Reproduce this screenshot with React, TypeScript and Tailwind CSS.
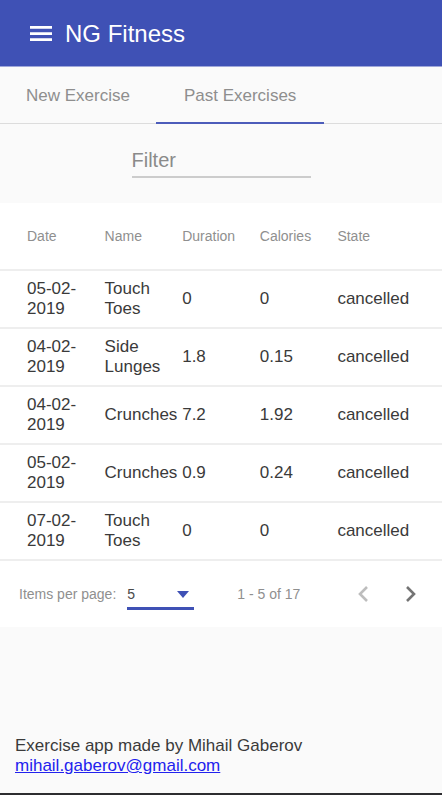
const exercises = [
  { date: '05-02-2019', name: 'Touch Toes', duration: '0', calories: '0', state: 'cancelled' },
  { date: '04-02-2019', name: 'Side Lunges', duration: '1.8', calories: '0.15', state: 'cancelled' },
  { date: '04-02-2019', name: 'Crunches', duration: '7.2', calories: '1.92', state: 'cancelled' },
  { date: '05-02-2019', name: 'Crunches', duration: '0.9', calories: '0.24', state: 'cancelled' },
  { date: '07-02-2019', name: 'Touch Toes', duration: '0', calories: '0', state: 'cancelled' },
];

const columns = ['Date', 'Name', 'Duration', 'Calories', 'State'];

function Header() {
  return (
    <header className="flex h-[67px] items-center gap-3 border-b border-[#9fa7da] bg-[#3f51b5] px-[29px] pt-0.5 text-white">
      <button type="button" aria-label="Open menu">
        <svg className="h-4 w-6" viewBox="0 0 24 16" fill="currentColor">
          <path d="M1 0h22v2.7H1zM1 6.2h22v2.7H1zM1 12.2h22v2.7H1z" />
        </svg>
      </button>
      <h1 className="text-2xl">NG Fitness</h1>
    </header>
  );
}

function Tabs() {
  return (
    <nav role="tablist" className="flex h-[57px] border-b border-[#dcdcdc] text-[17px] text-[#8e8e8e]">
      <button type="button" role="tab" aria-selected="false" className="-mb-px border-b-2 border-transparent px-[26px] pt-0.5">
        New Exercise
      </button>
      <button type="button" role="tab" aria-selected="true" className="-mb-px border-b-2 border-[#4c5cba] px-7 pt-0.5">
        Past Exercises
      </button>
    </nav>
  );
}

function ExerciseTable() {
  return (
    <table className="block bg-white">
      <thead className="block">
        <tr className="flex h-[68px] items-center border-b-2 border-[#eeeeee] px-[27px]">
          {columns.map((column) => (
            <th key={column} scope="col" className="w-0 flex-1 text-left text-sm font-normal text-[#8f8f8f]">
              {column}
            </th>
          ))}
        </tr>
      </thead>
      <tbody className="block">
        {exercises.map((exercise, index) => (
          <tr key={index} className="flex h-[58px] items-center border-b-2 border-[#eeeeee] px-[27px] text-[17px] leading-5 text-[#3a3a3a]">
            <td className="w-0 flex-1">{exercise.date}</td>
            <td className="w-0 flex-1">{exercise.name}</td>
            <td className="w-0 flex-1">{exercise.duration}</td>
            <td className="w-0 flex-1">{exercise.calories}</td>
            <td className="w-0 flex-1">{exercise.state}</td>
          </tr>
        ))}
      </tbody>
    </table>
  );
}

function Paginator() {
  return (
    <div className="flex h-[66px] items-center bg-white pr-[19px] pl-[19px] text-sm text-[#8f8f8f]">
      <label htmlFor="page-size">Items per page:</label>
      <div className="relative ml-[11px] w-[67px]">
        <select
          id="page-size"
          defaultValue="5"
          className="mt-[3px] block h-7 w-full appearance-none rounded-none border-b-3 border-[#3f51b5] bg-transparent text-[#4a4a4a] outline-none"
        >
          <option>5</option>
          <option>10</option>
          <option>20</option>
        </select>
        <svg className="pointer-events-none absolute top-3 right-[5px] h-[7px] w-3" viewBox="0 0 12 7" fill="#3f51b5">
          <path d="M0 0h12L6 7z" />
        </svg>
      </div>
      <span className="ml-[43px]">1 - 5 of 17</span>
      <div className="ml-auto flex gap-6">
        <button type="button" disabled aria-label="Previous page" className="flex size-6 items-center justify-center text-[#bdbdbd]">
          <svg className="h-4 w-[10px]" viewBox="0 0 10 16" fill="none" stroke="currentColor" strokeWidth="2.6">
            <path d="M9 1L2 8l7 7" />
          </svg>
        </button>
        <button type="button" aria-label="Next page" className="flex size-6 items-center justify-center text-[#747474]">
          <svg className="h-4 w-[10px]" viewBox="0 0 10 16" fill="none" stroke="currentColor" strokeWidth="2.6">
            <path d="M1 1l7 7-7 7" />
          </svg>
        </button>
      </div>
    </div>
  );
}

export default function App() {
  return (
    <div className="flex min-h-screen flex-col border-b-2 border-[#2d2d30] bg-[#fafafa] font-['Liberation_Sans',Arial,sans-serif]">
      <Header />
      <Tabs />
      <main>
        <div className="flex h-[79px] justify-center pt-5">
          <input
            type="text"
            aria-label="Filter"
            placeholder="Filter"
            className="h-[34px] w-[179px] border-b-2 border-[#cccccc] bg-transparent text-xl text-[#3a3a3a] outline-none placeholder:text-[#8a8a8a]"
          />
        </div>
        <ExerciseTable />
        <Paginator />
      </main>
      <footer className="mt-auto px-[15px] pb-[17px] text-[17px] leading-5 text-[#3a3a3a]">
        <p>Exercise app made by Mihail Gaberov</p>
        <a href="mailto:mihail.gaberov@gmail.com" className="text-[#2222ee] underline">
          mihail.gaberov@gmail.com
        </a>
      </footer>
    </div>
  );
}
